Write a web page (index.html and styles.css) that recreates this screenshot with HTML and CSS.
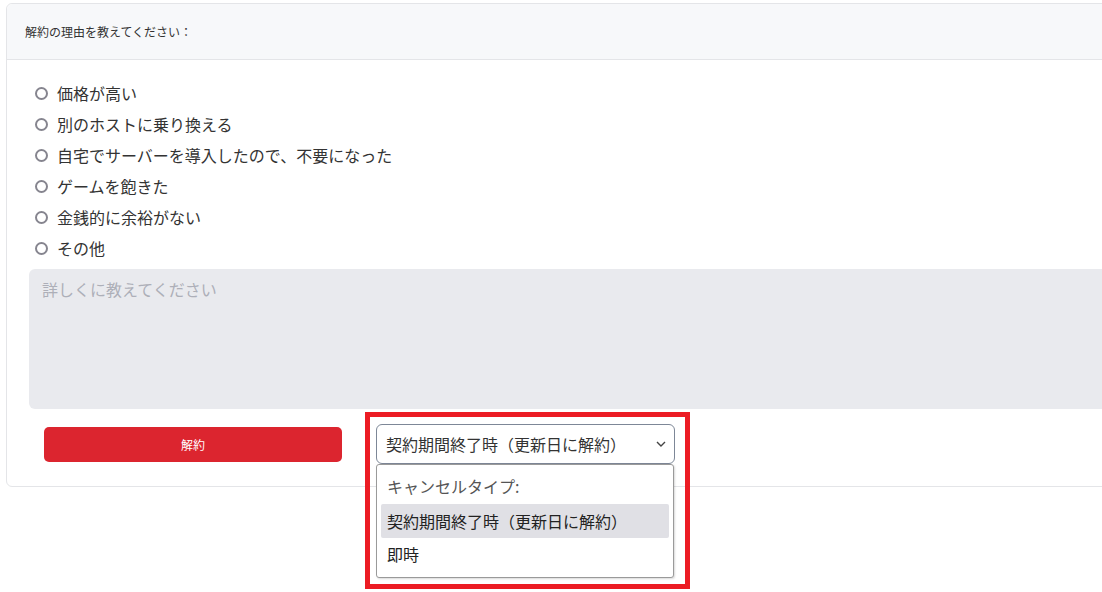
FILE: index.html
```html
<!DOCTYPE html>
<html lang="ja">
<head>
<meta charset="utf-8">
<title>解約</title>
<link rel="stylesheet" href="styles.css">
</head>
<body>
<div class="page">
  <div class="card">
    <div class="card-header">解約の理由を教えてください：</div>
    <div class="card-body">
      <ul class="reasons">
        <li class="reason"><span class="radio"></span><span>価格が高い</span></li>
        <li class="reason"><span class="radio"></span><span>別のホストに乗り換える</span></li>
        <li class="reason"><span class="radio"></span><span>自宅でサーバーを導入したので、不要になった</span></li>
        <li class="reason"><span class="radio"></span><span>ゲームを飽きた</span></li>
        <li class="reason"><span class="radio"></span><span>金銭的に余裕がない</span></li>
        <li class="reason"><span class="radio"></span><span>その他</span></li>
      </ul>
      <div class="detail">詳しくに教えてください</div>
      <div class="actions">
        <button class="btn-cancel">解約</button>
        <div class="select-wrap">
          <div class="select">
            <span>契約期間終了時（更新日に解約）</span>
            <svg class="chevron" width="10" height="6" viewBox="0 0 10 6"><path d="M1 1l4 4 4-4" fill="none" stroke="#444" stroke-width="1.4"/></svg>
          </div>
          <div class="menu">
            <div class="menu-item menu-label">キャンセルタイプ:</div>
            <div class="menu-item menu-selected">契約期間終了時（更新日に解約）</div>
            <div class="menu-item">即時</div>
          </div>
          <div class="highlight"></div>
        </div>
      </div>
    </div>
  </div>
</div>
</body>
</html>
```

FILE: styles.css
```css
html {
  overflow: hidden;
}
html, body {
  margin: 0;
  padding: 0;
  background: #ffffff;
}
body {
  min-height: 592px;
  font-family: "Noto Sans CJK JP", "Noto Sans", sans-serif;
  color: #333333;
}
.page {
  padding: 3px 0 0 6px;
  width: 1130px;
}
.card {
  border: 1px solid #e4e5e8;
  border-radius: 6px;
  background: #ffffff;
}
.card-header {
  height: 56px;
  box-sizing: border-box;
  display: flex;
  align-items: center;
  padding-left: 18px;
  font-size: 12px;
  color: #333;
  background: #f7f8fa;
  border-bottom: 1px solid #e4e5e8;
  border-radius: 6px 6px 0 0;
}
.card-body {
  padding: 17px 0 22px 22px;
}
.reasons {
  list-style: none;
  margin: 0;
  padding: 0 0 0 6px;
}
.reason {
  height: 31px;
  display: flex;
  align-items: center;
  gap: 9px;
  font-size: 16px;
  line-height: 20px;
  color: #333;
}
.radio {
  width: 13px;
  height: 13px;
  box-sizing: border-box;
  border: 2px solid #86858f;
  border-radius: 50%;
  flex: none;
  margin-top: 1px;
}
.detail {
  margin-top: 6px;
  height: 140px;
  box-sizing: border-box;
  background: #e9eaee;
  border-radius: 6px 0 0 6px;
  padding: 10px 13px;
  font-size: 16px;
  line-height: 20px;
  color: #adafb8;
}
.actions {
  margin-top: 15px;
  display: flex;
  align-items: center;
  gap: 34px;
  padding-left: 15px;
}
.btn-cancel {
  width: 298px;
  height: 35px;
  border: none;
  border-radius: 5px;
  background: #dc252f;
  color: #ffffff;
  font-family: inherit;
  font-size: 12px;
  padding: 0;
}
.select-wrap {
  position: relative;
  width: 299px;
}
.select {
  height: 40px;
  box-sizing: border-box;
  border: 1px solid #7d8797;
  border-radius: 6px;
  display: flex;
  align-items: center;
  justify-content: space-between;
  padding: 0 8px 0 9px;
  font-size: 16px;
  color: #333;
}
.chevron {
  display: block;
}
.menu {
  position: absolute;
  top: 40px;
  left: 0;
  width: 298px;
  height: 114px;
  box-sizing: border-box;
  background: #ffffff;
  border: 1px solid #9a9a9a;
  border-radius: 3px;
  box-shadow: 1px 1px 2px rgba(0,0,0,0.15);
  padding: 3px 4px 8px 4px;
  font-size: 16px;
}
.menu-item {
  height: 32px;
  display: flex;
  align-items: center;
  padding-left: 6px;
  color: #222;
  border-radius: 2px;
}
.menu-label {
  height: 36px;
  color: #555;
}
.menu-selected {
  height: 34px;
  background: #e0e0e5;
}
.highlight {
  position: absolute;
  top: -12px;
  left: -11px;
  width: 325px;
  height: 177px;
  box-sizing: border-box;
  border: 5px solid #ec1c24;
  pointer-events: none;
}
```
